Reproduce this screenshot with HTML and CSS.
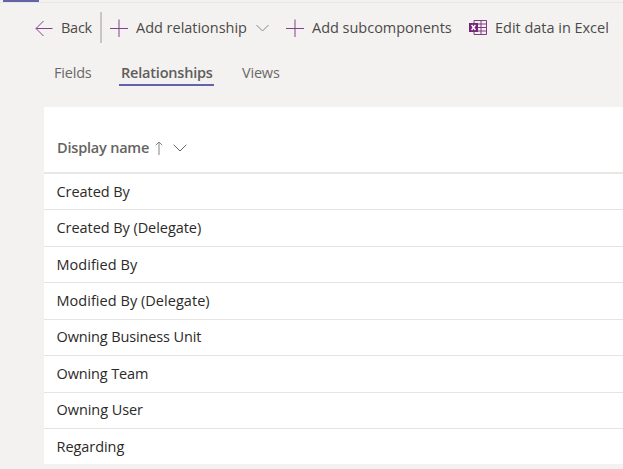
FILE: index.html
```html
<!DOCTYPE html>
<html lang="en">
<head>
<meta charset="utf-8">
<title>Relationships</title>
<link rel="stylesheet" href="styles.css">
</head>
<body>
<div class="topline"><div class="accent"></div></div>
<nav class="commands">
  <button class="command back"><svg width="18" height="18" viewBox="0 0 18 18"><path d="M17.5 9.5H1.2M8.5 2 1 9.500l7.500 7.500"/></svg><span>Back</span></button>
  <div class="divider"></div>
  <button class="command relation"><svg width="18" height="18" viewBox="0 0 18 18"><path d="M0 9.500H18M9 .5V18"/></svg><span>Add relationship</span><svg class="chevron" width="13" height="8" viewBox="0 0 13 8"><path d="m.5 1 6 6 6-6"/></svg></button>
  <button class="command sub"><svg width="18" height="18" viewBox="0 0 18 18"><path d="M0 9.500H18M9 .5V18"/></svg><span>Add subcomponents</span></button>
  <button class="command excel"><svg width="18" height="17" viewBox="0 0 18 17"><path d="M5 1.500H17.500V15.500H5ZM5 5H17.500M5 8.500H17.500M5 12H17.500M12 1.500V15.500"/><path class="tile" d="M0 4H9V13H0Z"/><path class="mark" d="m2.600 6 3.800 5M6.400 6l-3.800 5"/></svg><span>Edit data in Excel</span></button>
</nav>
<nav class="tabs">
  <a class="tab fields">Fields</a>
  <a class="tab selected">Relationships</a>
  <a class="tab views">Views</a>
</nav>
<main class="list">
  <div class="header"><span>Display name</span><svg class="sort" width="8" height="14" viewBox="0 0 8 14"><path d="M4 14V1M.8 4.200 4 1l3.200 3.200"/></svg><svg class="chevron" width="14" height="8" viewBox="0 0 14 8"><path d="m.7.800 6.300 6.200 6.300-6.200"/></svg></div>
  <div class="row"><span>Created By</span></div>
  <div class="row"><span>Created By (Delegate)</span></div>
  <div class="row modified"><span>Modified By</span></div>
  <div class="row modified"><span>Modified By (Delegate)</span></div>
  <div class="row owning"><span>Owning Business Unit</span></div>
  <div class="row owning"><span>Owning Team</span></div>
  <div class="row"><span>Owning User</span></div>
  <div class="row"><span>Regarding</span></div>
</main>
</body>
</html>
```
FILE: styles.css
```css
* { box-sizing: border-box; }
body {
  margin: 0;
  height: 469px;
  overflow: hidden;
  background: #f3f2f1;
  color: #2b2a29;
  font: 14.5px/20px "Open Sans", "Noto Sans", sans-serif;
  letter-spacing: -0.2px;
}
svg { flex: none; fill: none; stroke: #85408a; stroke-width: 1; }
.topline { height: 3px; border-bottom: 1px solid #e8e7e6; }
.accent { width: 36px; height: 2px; margin-left: 3px; background: #6264a7; }
.commands { display: flex; align-items: center; height: 49px; padding-left: 35px; }
.command {
  display: flex;
  align-items: center;
  flex: none;
  padding: 0;
  border: 0;
  background: none;
  color: #4c4a48;
  font: inherit;
  letter-spacing: -0.02px;
  white-space: nowrap;
}
.command > span { margin-left: 8px; padding-top: 1px; }
.back { width: 65px; letter-spacing: -0.25px; }
.divider { width: 2px; height: 31px; background: #c8c6c4; }
.relation { width: 176px; margin-left: 8px; }
.sub { width: 183px; }
.chevron { stroke: #888583; }
.relation .chevron { margin-left: 9px; }
.excel svg { stroke: #813886; }
.excel .tile { fill: #742774; stroke: none; }
.excel .mark { stroke: #fff; stroke-width: 1.4; }
.tabs { display: flex; height: 34px; margin-top: 8px; padding-left: 54px; color: #6b6967; }
.tab { height: 26px; padding-top: 3px; }
.fields { width: 65px; }
.selected { width: 95px; padding-left: 2px; border-bottom: 2px solid #6264a7; font-weight: 600; color: #5f5d5b; }
.views { margin-left: 28px; }
.list { height: 357px; margin: 13px 0 0 44px; background: #fff; }
.header { display: flex; align-items: center; height: 67px; padding: 16px 0 0 13px; border-bottom: 2px solid #e8e7e6; font-weight: 600; color: #656361; }
.sort { margin-left: 6px; stroke: #858381; }
.header .chevron { margin-left: 10px; stroke: #656361; }
.row { display: flex; align-items: center; height: 36.45px; padding-left: 12.5px; border-bottom: 1px solid #e5e4e3; letter-spacing: -0.06px; }
.modified { letter-spacing: 0.04px; }
.owning { letter-spacing: -0.13px; }
.row:last-child { border: 0; }
```
